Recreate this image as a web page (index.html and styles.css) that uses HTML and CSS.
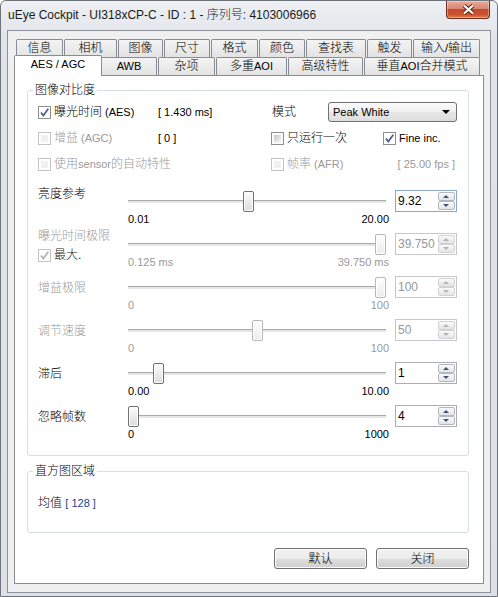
FILE: index.html
```html
<!DOCTYPE html>
<html>
<head>
<meta charset="utf-8">
<title>uEye Cockpit</title>
<link rel="stylesheet" href="styles.css">
</head>
<body>
<div class="window">
  <div class="titlebar">
    <span class="title">uEye Cockpit - UI318xCP-C - ID : 1 - 序列号: 4103006966</span>
    <span class="close"><svg width="13" height="11" viewBox="0 0 13 11"><path class="x-edge" d="M2 1.5 11 9.5M11 1.5 2 9.5"/><path class="x-face" d="M2 1.5 11 9.5M11 1.5 2 9.5"/></svg></span>
  </div>

  <div class="client">
    <div class="tabrow back">
      <span class="tab">信息</span>
      <span class="tab">相机</span>
      <span class="tab">图像</span>
      <span class="tab">尺寸</span>
      <span class="tab">格式</span>
      <span class="tab">颜色</span>
      <span class="tab">查找表</span>
      <span class="tab">触发</span>
      <span class="tab">输入<span class="en">/</span>输出</span>
    </div>
    <div class="tabrow front">
      <span class="tab sel en">AES / AGC</span>
      <span class="tab en">AWB</span>
      <span class="tab">杂项</span>
      <span class="tab">多重<span class="en">AOI</span></span>
      <span class="tab">高级特性</span>
      <span class="tab">垂直<span class="en">AOI</span>合并模式</span>
    </div>

    <div class="page">
      <fieldset class="group">
        <legend>图像对比度</legend>

        <div class="opts">
          <label class="opt"><span class="cb on"><svg width="11" height="11" viewBox="0 0 11 11"><path d="M2 5.5 4.3 8.6 9.3 1.8"/></svg></span>曝光时间 <span class="en">(AES)</span></label>
          <span class="en">[ 1.430 ms]</span>
          <span class="mode">模式</span>
          <span class="select en">Peak White</span>

          <label class="opt dis"><span class="cb"></span>增益 <span class="en">(AGC)</span></label>
          <span class="en">[ 0 ]</span>
          <label class="opt"><span class="cb"></span>只运行一次</label>
          <label class="opt fine"><span class="cb on"><svg width="11" height="11" viewBox="0 0 11 11"><path d="M2 5.5 4.3 8.6 9.3 1.8"/></svg></span><span class="en">Fine inc.</span></label>

          <label class="opt dis"><span class="cb"></span><span>使用<span class="en">sensor</span>的自动特性</span></label>
          <span></span>
          <label class="opt dis"><span class="cb"></span>帧率 <span class="en">(AFR)</span></label>
          <span class="en dis fps">[ 25.00 fps ]</span>
        </div>

        <div class="sliders">
          <div class="srow">
            <span class="slabel high">亮度参考</span>
            <div class="track"><span class="thumb" style="--f:0.466"></span></div>
            <div class="ends"><span>0.01</span><span>20.00</span></div>
            <div class="spin focus"><span class="val">9.32</span><span class="arrows"><span class="up"></span><span class="dn"></span></span></div>
          </div>

          <div class="srow dis">
            <div class="slabel higher">曝光时间极限
              <label class="opt max"><span class="cb on"><svg width="11" height="11" viewBox="0 0 11 11"><path d="M2 5.5 4.3 8.6 9.3 1.8"/></svg></span>最大.</label>
            </div>
            <div class="track"><span class="thumb" style="--f:1"></span></div>
            <div class="ends"><span>0.125 ms</span><span>39.750 ms</span></div>
            <div class="spin"><span class="val">39.750</span><span class="arrows"><span class="up"></span><span class="dn"></span></span></div>
          </div>

          <div class="srow dis">
            <span class="slabel">增益极限</span>
            <div class="track"><span class="thumb" style="--f:1"></span></div>
            <div class="ends"><span>0</span><span>100</span></div>
            <div class="spin"><span class="val">100</span><span class="arrows"><span class="up"></span><span class="dn"></span></span></div>
          </div>

          <div class="srow dis">
            <span class="slabel">调节速度</span>
            <div class="track"><span class="thumb" style="--f:0.5"></span></div>
            <div class="ends"><span>0</span><span>100</span></div>
            <div class="spin"><span class="val">50</span><span class="arrows"><span class="up"></span><span class="dn"></span></span></div>
          </div>

          <div class="srow">
            <span class="slabel">滞后</span>
            <div class="track"><span class="thumb" style="--f:0.1"></span></div>
            <div class="ends"><span>0.00</span><span>10.00</span></div>
            <div class="spin"><span class="val">1</span><span class="arrows"><span class="up"></span><span class="dn"></span></span></div>
          </div>

          <div class="srow">
            <span class="slabel">忽略帧数</span>
            <div class="track"><span class="thumb" style="--f:0"></span></div>
            <div class="ends"><span>0</span><span>1000</span></div>
            <div class="spin"><span class="val">4</span><span class="arrows"><span class="up"></span><span class="dn"></span></span></div>
          </div>
        </div>
      </fieldset>

      <fieldset class="group hist">
        <legend>直方图区域</legend>
        <div class="mean">均值 <span class="en blue">[ 128 ]</span></div>
      </fieldset>

      <div class="buttons">
        <button class="btn">默认</button>
        <button class="btn">关闭</button>
      </div>
    </div>
  </div>
</div>
</body>
</html>
```

FILE: styles.css
```css
/* uEye Cockpit, AES / AGC property page
*/

body
{ margin: 0;
  font: 300 12px/14px "Liberation Sans", "Noto Sans CJK SC", sans-serif;
  color: #000;
}

.en { font-size: 11px; }
.dis { color: #999; }
.blue { color: #1d3f8f; }

/* Window frame */

.window
{ box-sizing: border-box;
  width: 498px;
  height: 597px;
  display: flex;
  flex-direction: column;
  padding: 0 6px 3px 6px;
  border: 1px solid #6f747a;
  border-radius: 6px 6px 0 0;
  background: linear-gradient(#eef0f3, #e0e4e9 40px, #dde1e6);
}

.titlebar
{ height: 29px;
  display: flex;
  align-items: flex-start;
  flex: none;
}

.title
{ margin: 7px 0 0 1px;
  color: #1b1b1b;
  white-space: nowrap;
}

.close
{ box-sizing: border-box;
  width: 44px;
  height: 18px;
  margin: 0 1px 0 auto;
  display: flex;
  align-items: center;
  justify-content: center;
  border: 1px solid #6d2a1d;
  border-top: 0;
  border-radius: 0 0 4px 4px;
  background: linear-gradient(#e9a998, #d98673 45%, #c64a2f 50%, #c9532f 80%, #de8050);
  box-shadow: inset 0 0 0 1px rgba(255,255,255,0.35);
}

.x-edge { stroke: #5b1f14; stroke-width: 4; fill: none; }
.x-face { stroke: #fff; stroke-width: 2.2; fill: none; }

.client
{ flex: 1;
  display: flex;
  flex-direction: column;
  border: 1px solid #8d9299;
  background: #f0f0f0;
  padding: 8px 6px;
}

/* Tabs */

.tabrow
{ display: grid;
  grid-template-rows: 18px;
  column-gap: 1px;
  width: 464px;
  margin-left: 2px;
  flex: none;
}

.tabrow.back { grid-template-columns: 47px 53px 45px 46px 47px 46px 60px 45px 67px; }
.tabrow.front { grid-template-columns: 84px 56px 57px 71px 75px 116px; }

.tab
{ border: 1px solid #898c95;
  border-bottom: 0;
  border-radius: 2px 2px 0 0;
  background: linear-gradient(#f4f4f4, #e3e3e3);
  text-align: center;
  line-height: 16px;
  white-space: nowrap;
}

.tab.sel
{ position: relative;
  z-index: 1;
  margin: -2px -2px -1px;
  background: #fff;
}

.page
{ flex: 1;
  display: flex;
  flex-direction: column;
  border: 1px solid #898c95;
  background: #fff;
  padding: 7px 14px 0 12px;
}

/* Group boxes */

.group
{ margin: 0;
  min-width: 0;
  padding: 2px 10px 13px;
  border: 1px solid #d5dfe5;
  border-radius: 3px;
}

.group legend
{ padding: 0 2px;
  margin-left: -5px;
  line-height: 14px;
}

.hist
{ margin-top: 8px;
  padding-bottom: 22px;
}

.mean { margin-top: 16px; }

/* Check boxes and options */

.opts
{ display: grid;
  grid-template-columns: 120px 113px 57px 129px;
  grid-auto-rows: 26px;
  align-items: center;
}

.opt
{ display: flex;
  align-items: center;
  gap: 3px;
  white-space: nowrap;
}

.mode { padding-left: 1px; }
.fine { padding-left: 55px; }
.fps { text-align: right; padding-right: 2px; }

.cb
{ box-sizing: border-box;
  width: 13px;
  height: 13px;
  flex: none;
  padding: 2px;
  border: 1px solid #8e8f8f;
  background: linear-gradient(135deg, #c3c7cd, #f4f4f4) content-box, #fbfbfb;
}

.cb.on
{ padding: 0;
  background: #fff;
}

.cb svg { display: block; }
.cb path { fill: none; stroke: #4a5c8c; stroke-width: 1.7; }

.dis .cb
{ border-color: #c4c4c4;
  background: linear-gradient(#f1f1f1, #f1f1f1) content-box, #fff;
}

.dis .cb.on { background: #fff; }
.dis .cb path { stroke: #b0b0b0; }

.select
{ box-sizing: border-box;
  position: relative;
  height: 20px;
  padding-left: 4px;
  display: flex;
  align-items: center;
  border: 1px solid #707070;
  border-radius: 3px;
  background: linear-gradient(#fcfcfc, #f0f0f0 50%, #e6e6e6 51%, #dedede);
}

.select::after
{ content: "";
  position: absolute;
  right: 6px;
  top: 7px;
  border: 4px solid transparent;
  border-top-color: #000;
  border-bottom: 0;
}

/* Sliders */

.sliders
{ display: grid;
  row-gap: 7px;
  margin-top: 14px;
}

.srow
{ display: grid;
  grid-template-columns: 90px 258px 71px;
  grid-template-rows: 21px 15px;
}

.slabel
{ grid-column: 1;
  grid-row: 1 / 3;
  align-self: start;
  margin-top: 4px;
  white-space: nowrap;
}

.slabel.high { margin-top: -4px; }
.slabel.higher { margin-top: -5px; }

.max
{ margin-top: 5px;
  color: #222;
}

.track
{ grid-column: 2;
  grid-row: 1;
  position: relative;
}

.track::before
{ content: "";
  position: absolute;
  left: 0;
  right: 0;
  top: 9px;
  height: 3px;
  box-sizing: border-box;
  border-top: 1px solid #a9a9a9;
  background: #e4e6e7;
}

.thumb
{ position: absolute;
  top: 0;
  left: calc(var(--f) * (100% - 11px));
  box-sizing: border-box;
  width: 11px;
  height: 21px;
  border: 1px solid #707070;
  border-radius: 2px;
  background: linear-gradient(#fbfbfb, #dcdcdc);
  box-shadow: inset 0 0 0 1px #fff;
}

.dis .thumb
{ border-color: #b7b7b7;
  background: linear-gradient(#fdfdfd, #ececec);
}

.ends
{ grid-column: 2;
  grid-row: 2;
  display: flex;
  justify-content: space-between;
  margin-right: -3px;
  font-size: 11px;
  line-height: 15px;
}

.spin
{ grid-column: 3;
  grid-row: 1;
  justify-self: end;
  align-self: start;
  margin-top: -1px;
  box-sizing: border-box;
  width: 62px;
  height: 22px;
  display: flex;
  border: 1px solid #abadb3;
  background: #fff;
}

.spin.focus { border-color: #8aa7cf; }
.dis .spin { border-color: #c6c8cc; }

.spin .val
{ flex: 1;
  padding-left: 2px;
  line-height: 20px;
}

.arrows
{ width: 17px;
  margin: 1px 1px 1px 0;
  display: flex;
  flex-direction: column;
}

.up, .dn
{ flex: 1;
  position: relative;
  border: 1px solid #b3b7c0;
  border-radius: 2px;
  background: linear-gradient(#fafafa, #e4e4e4);
}

.up::after, .dn::after
{ content: "";
  position: absolute;
  left: 4px;
  top: 2px;
  border: 3.5px solid transparent;
}

.up::after { border-bottom: 3px solid #3f5282; border-top: 0; }
.dn::after { border-top: 3px solid #3f5282; border-bottom: 0; }
.dis .up::after { border-bottom-color: #b4b4b4; }
.dis .dn::after { border-top-color: #b4b4b4; }
.dis .up, .dis .dn { border-color: #d0d2d6; }

/* Buttons */

.buttons
{ display: flex;
  justify-content: flex-end;
  gap: 9px;
  margin-top: 15px;
}

.btn
{ box-sizing: border-box;
  width: 93px;
  height: 21px;
  padding: 0;
  border: 1px solid #707070;
  border-radius: 3px;
  background: linear-gradient(#f2f2f2, #ebebeb 50%, #dddddd 51%, #cfcfcf);
  box-shadow: inset 0 0 0 1px #fcfcfc;
  font: inherit;
  color: #000;
}
```
